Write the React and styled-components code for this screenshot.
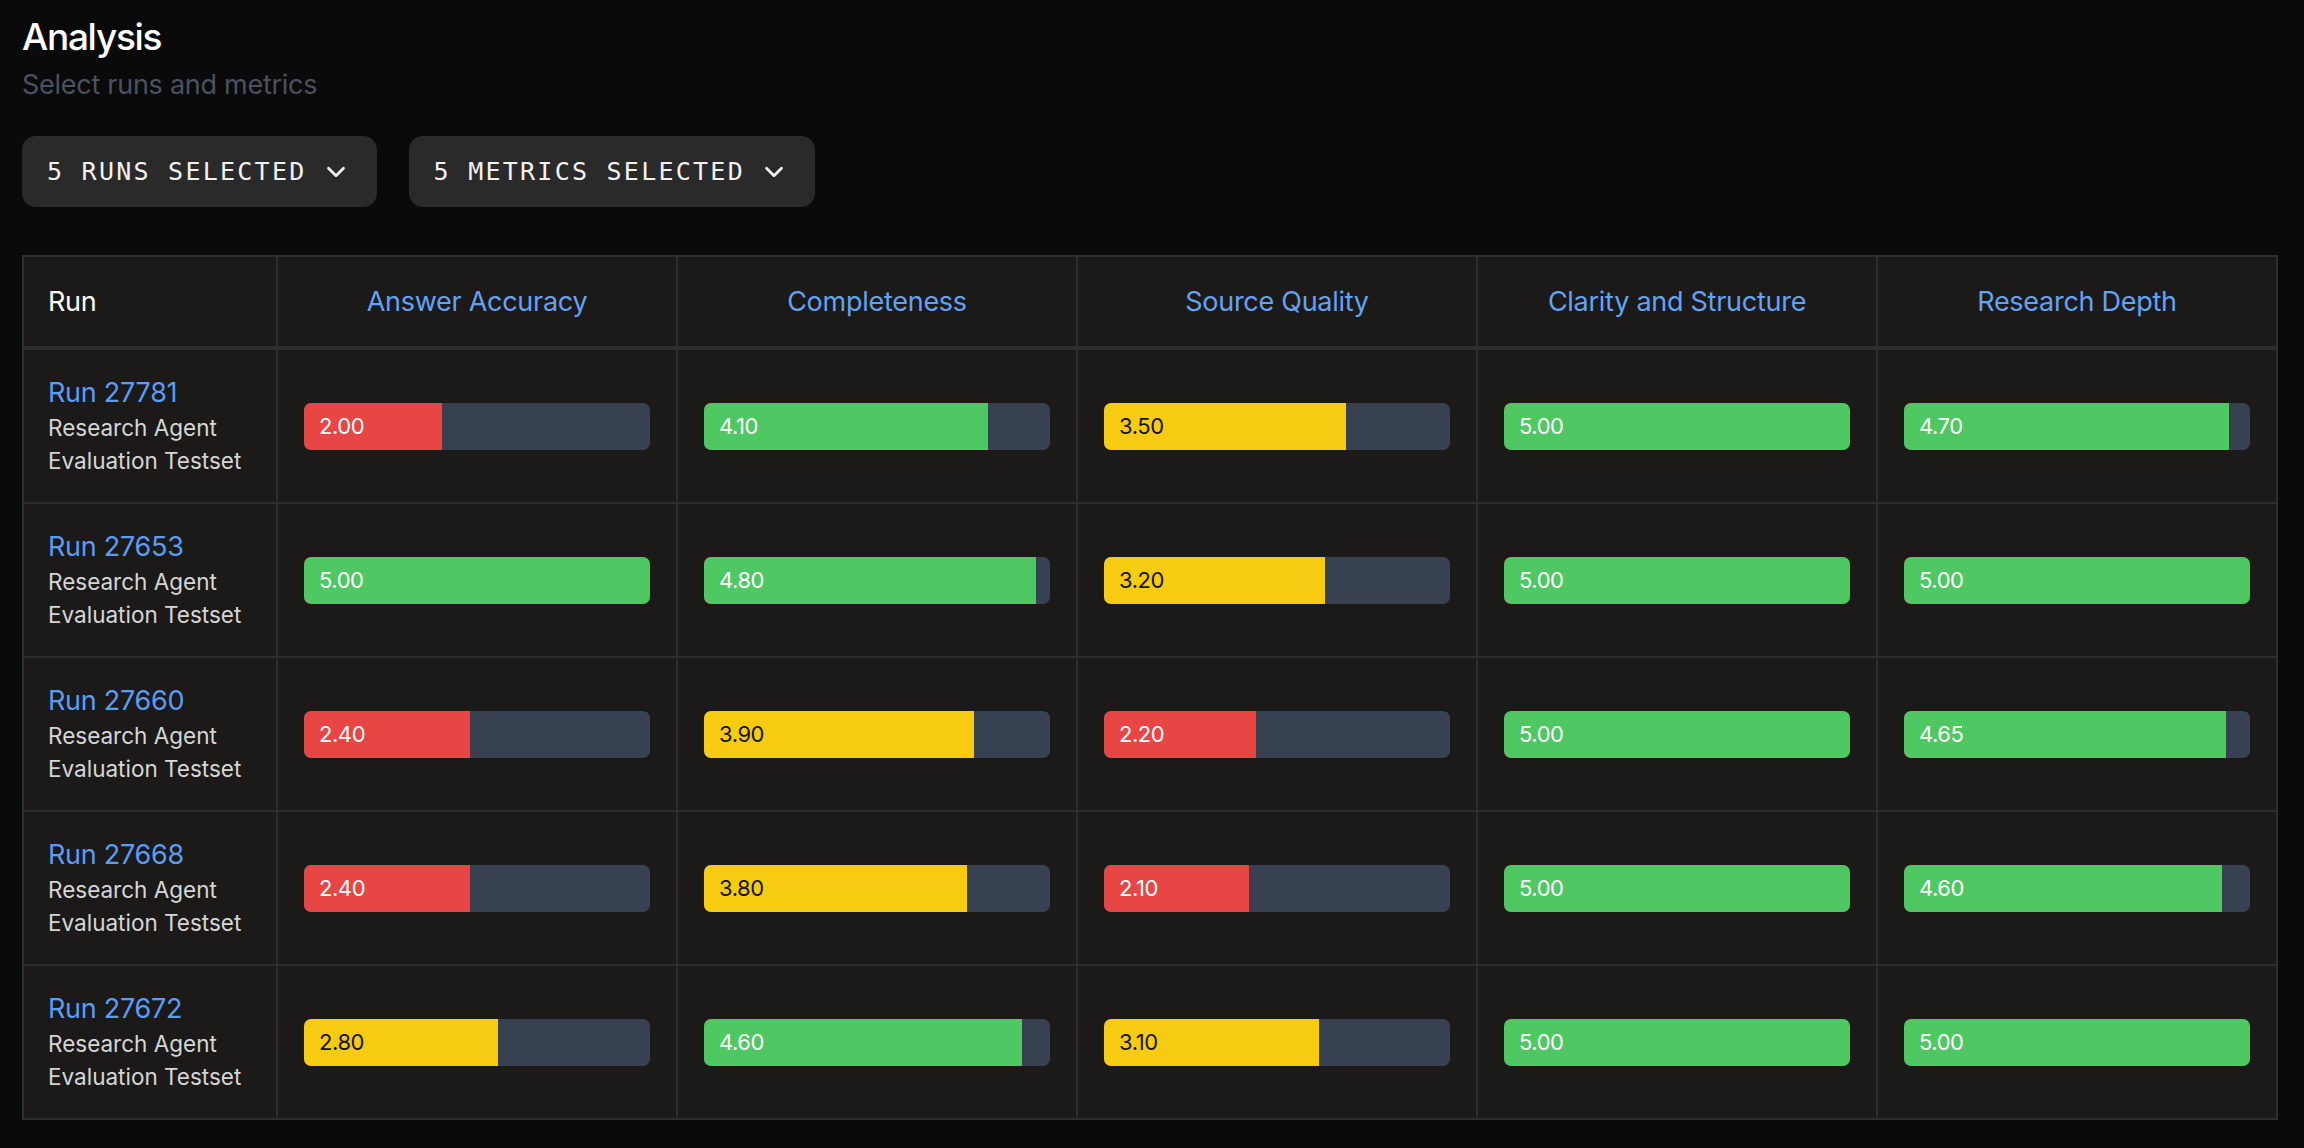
import React from 'react';
import styled, { createGlobalStyle } from 'styled-components';
import { ChevronDown } from 'lucide-react';

const GlobalStyle = createGlobalStyle`
    body {
        margin: 0;
        background: #0a0a0a;
        font-family: Inter, "Noto Sans", sans-serif;
        color: #f5f5f5;
    }
`;

const metrics = ['Answer Accuracy', 'Completeness', 'Source Quality', 'Clarity and Structure', 'Research Depth'];

const runs = [
    { id: 27781, scores: [2.0, 4.1, 3.5, 5.0, 4.7] },
    { id: 27653, scores: [5.0, 4.8, 3.2, 5.0, 5.0] },
    { id: 27660, scores: [2.4, 3.9, 2.2, 5.0, 4.65] },
    { id: 27668, scores: [2.4, 3.8, 2.1, 5.0, 4.6] },
    { id: 27672, scores: [2.8, 4.6, 3.1, 5.0, 5.0] },
];

function level(score) {
    if (score < 2.5) return 'low';
    if (score < 4) return 'mid';
    return 'high';
}

function ScoreBar({ score }) {
    const tone = level(score);
    return (
        <Track>
            <Fill $tone={tone} style={{ width: `${(score / 5) * 100}%` }} />
            <Value $tone={tone}>{score.toFixed(2)}</Value>
        </Track>
    );
}

function App() {
    return (
        <Page>
            <GlobalStyle />
            <Title>Analysis</Title>
            <Subtitle>Select runs and metrics</Subtitle>
            <Toolbar>
                <SelectButton>
                    5 RUNS SELECTED
                    <ChevronDown size={30} strokeWidth={2.2} />
                </SelectButton>
                <SelectButton>
                    5 METRICS SELECTED
                    <ChevronDown size={30} strokeWidth={2.2} />
                </SelectButton>
            </Toolbar>
            <Table>
                <colgroup>
                    <col style={{ width: 254 }} />
                    {metrics.map((m) => <col key={m} style={{ width: 400 }} />)}
                </colgroup>
                <thead>
                    <tr>
                        <HeadCell $first>Run</HeadCell>
                        {metrics.map((m) => <HeadCell key={m}>{m}</HeadCell>)}
                    </tr>
                </thead>
                <tbody>
                    {runs.map((run) => (
                        <tr key={run.id}>
                            <RunCell>
                                <RunLink>Run {run.id}</RunLink>
                                <RunSet>Research Agent<br />Evaluation Testset</RunSet>
                            </RunCell>
                            {run.scores.map((s, i) => (
                                <Cell key={i}>
                                    <ScoreBar score={s} />
                                </Cell>
                            ))}
                        </tr>
                    ))}
                </tbody>
            </Table>
        </Page>
    );
}

const Page = styled.main`
    padding: 12px 27px 30px 22px;
`;

const Title = styled.h1`
    margin: 0;
    font-size: 37px;
    font-weight: 500;
    letter-spacing: -0.035em;
    line-height: 50px;
    color: #ffffff;
`;

const Subtitle = styled.p`
    margin: 5px 0 0;
    font-size: 27px;
    line-height: 36px;
    letter-spacing: -0.01em;
    color: #4a5260;
`;

const Toolbar = styled.div`
    display: flex;
    gap: 32px;
    margin-top: 33px;
`;

const SelectButton = styled.button`
    display: flex;
    align-items: center;
    gap: 14px;
    height: 71px;
    padding: 0 26px 0 25px;
    border: none;
    border-radius: 14px;
    background: #2a2a2a;
    color: #f2f2f2;
    font-family: "DejaVu Sans Mono", "Liberation Mono", monospace;
    font-size: 25px;
    letter-spacing: 0.09em;
`;

const Table = styled.table`
    margin-top: 48px;
    width: 2255px;
    table-layout: fixed;
    border-collapse: collapse;
    background: #1b1a19;
    border: 2px solid #2e2e2e;
`;

const HeadCell = styled.th`
    height: 89px;
    padding: 0 ${(p) => (p.$first ? '24px' : '10px')};
    border: 2px solid #2e2e2e;
    border-bottom-width: 4px;
    text-align: ${(p) => (p.$first ? 'left' : 'center')};
    font-size: 27px;
    font-weight: 400;
    letter-spacing: -0.01em;
    color: ${(p) => (p.$first ? '#ffffff' : '#64a2f6')};
`;

const Cell = styled.td`
    height: 152px;
    padding: 0 26px;
    border: 2px solid #2e2e2e;
    vertical-align: middle;
`;

const RunCell = styled(Cell)`
    padding: 0 24px;
`;

const RunLink = styled.div`
    font-size: 27px;
    line-height: 36px;
    letter-spacing: -0.01em;
    color: #5b9cf5;
`;

const RunSet = styled.div`
    font-size: 22.5px;
    line-height: 33px;
    color: #d6d6d6;
`;

const toneColor = { low: '#e84545', mid: '#f6cb12', high: '#4fc864' };

const Track = styled.div`
    position: relative;
    height: 47px;
    border-radius: 7px;
    overflow: hidden;
    background: #374151;
`;

const Fill = styled.div`
    height: 100%;
    background: ${(p) => toneColor[p.$tone]};
`;

const Value = styled.span`
    position: absolute;
    left: 15px;
    top: 0;
    line-height: 47px;
    font-size: 22px;
    letter-spacing: -0.02em;
    color: ${(p) => (p.$tone === 'mid' ? '#141414' : '#ffffff')};
`;

export default App;
